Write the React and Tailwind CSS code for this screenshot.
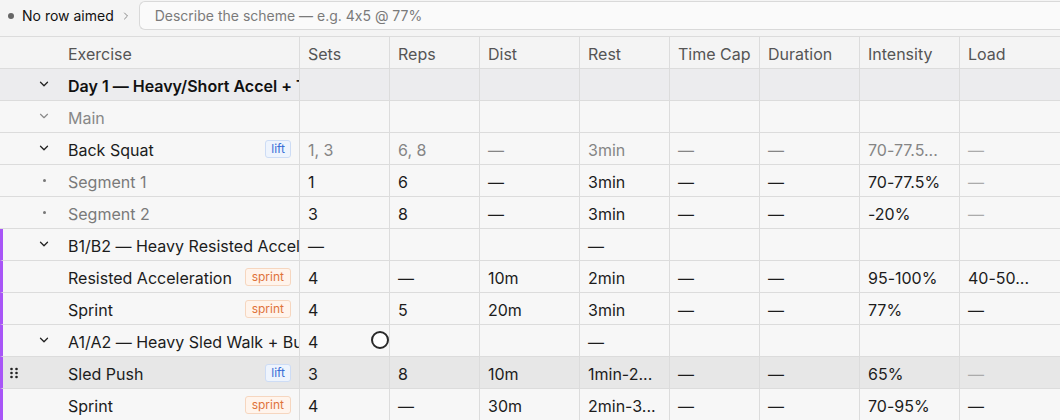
import { ChevronDown, ChevronRight } from 'lucide-react';

const COLS = ['Sets', 'Reps', 'Dist', 'Rest', 'Time Cap', 'Duration', 'Intensity', 'Load'];

// kind: day | block | parent | seg | group | item
const ROWS = [
  { kind: 'day', name: 'Day 1 — Heavy/Short Accel + T', vals: ['', '', '', '', '', '', '', ''] },
  { kind: 'block', name: 'Main', vals: ['', '', '', '', '', '', '', ''] },
  {
    kind: 'parent',
    name: 'Back Squat',
    tag: 'lift',
    vals: ['1, 3', '6, 8', '—', '3min', '—', '—', '70-77.5...', '—'],
    muted: true,
  },
  { kind: 'seg', name: 'Segment 1', vals: ['1', '6', '—', '3min', '—', '—', '70-77.5%', '—'], lightLoad: true },
  { kind: 'seg', name: 'Segment 2', vals: ['3', '8', '—', '3min', '—', '—', '-20%', '—'], lightLoad: true },
  { kind: 'group', name: 'B1/B2 — Heavy Resisted Accel', vals: ['—', '', '', '—', '', '', '', ''], bar: true },
  {
    kind: 'item',
    name: 'Resisted Acceleration',
    tag: 'sprint',
    vals: ['4', '—', '10m', '2min', '—', '—', '95-100%', '40-50...'],
    bar: true,
  },
  { kind: 'item', name: 'Sprint', tag: 'sprint', vals: ['4', '5', '20m', '3min', '—', '—', '77%', '—'], bar: true },
  { kind: 'group', name: 'A1/A2 — Heavy Sled Walk + Bu', vals: ['4', '', '', '—', '', '', '', ''], bar: true },
  {
    kind: 'item',
    name: 'Sled Push',
    tag: 'lift',
    vals: ['3', '8', '10m', '1min-2...', '—', '—', '65%', '—'],
    bar: true,
    hover: true,
    lightLoad: true,
  },
  { kind: 'item', name: 'Sprint', tag: 'sprint', vals: ['4', '—', '30m', '2min-3...', '—', '—', '70-95%', '—'], bar: true },
];

const Tag = ({ type }) =>
  type === 'lift' ? (
    <span className="shrink-0 rounded-[3px] border border-[#cddcf5] bg-[#eef4fd] px-[5px] text-[12px] leading-[16px] text-[#3a6fd6]">
      lift
    </span>
  ) : (
    <span className="shrink-0 rounded-[3px] border border-[#f6d6bf] bg-[#fff4ec] px-[6px] text-[12px] leading-[16px] text-[#e0733a]">
      sprint
    </span>
  );

const ExerciseCell = ({ row }) => {
  const base = `flex h-8 items-center overflow-hidden whitespace-nowrap border-b border-r border-[#dcdcdc] pt-[3px] ${row.tag ? 'pr-2' : ''}`;
  const bar = row.bar ? 'border-l-[3px] border-l-[#a855f7] pl-[1px]' : 'pl-1';
  let icon = <span className="w-[10px]" />;
  if (row.kind === 'day' || row.kind === 'parent' || row.kind === 'group')
    icon = <ChevronDown size={14} strokeWidth={2.2} className="text-[#222]" />;
  if (row.kind === 'block') icon = <ChevronDown size={14} strokeWidth={2} className="text-[#8a8a8a]" />;
  if (row.kind === 'seg') icon = <span className="h-[3px] w-[3px] rounded-full bg-[#777]" />;

  const nameCls =
    row.kind === 'day'
      ? 'font-semibold text-[#111]'
      : row.kind === 'block'
        ? 'text-[13.5px] text-[#888]'
        : row.kind === 'seg'
          ? 'text-[#7a7a7a]'
          : 'text-[#1c1c1c]';

  return (
    <div className={`${base} ${bar}`}>
      <span className="-mt-[3px] flex w-[20px] shrink-0 items-center justify-center">
        {row.hover && (
          <svg width="10" height="14" viewBox="0 0 10 14" fill="#222">
            <circle cx="2.5" cy="3" r="1.3" />
            <circle cx="7.5" cy="3" r="1.3" />
            <circle cx="2.5" cy="7" r="1.3" />
            <circle cx="7.5" cy="7" r="1.3" />
            <circle cx="2.5" cy="11" r="1.3" />
            <circle cx="7.5" cy="11" r="1.3" />
          </svg>
        )}
      </span>
      <span className="-mt-[4px] flex w-[44px] shrink-0 items-center justify-center pr-[4px]">{icon}</span>
      <span className={`text-[16px] ${nameCls}`}>{row.name}</span>
      {row.tag && (
        <span className="-mt-[3px] ml-auto flex">
          <Tag type={row.tag} />
        </span>
      )}
    </div>
  );
};

const Row = ({ row }) => {
  const bg = row.kind === 'day' ? 'bg-[#ececee]' : row.hover ? 'bg-[#e7e7e7]' : 'bg-[#f7f7f7]';
  return (
    <>
      <div className={`${bg} min-w-0`}>
        <ExerciseCell row={row} />
      </div>
      {row.vals.map((v, i) => {
        let color = 'text-[#1c1c1c]';
        if (row.muted) color = 'text-[#858585]';
        if (i === 7 && v === '—' && (row.lightLoad || row.muted)) color = 'text-[#ababab]';
        return (
          <div
            key={i}
            className={`${bg} flex h-8 items-center overflow-hidden whitespace-nowrap border-b border-r border-[#dcdcdc] px-2 pt-[3px] text-[16px] ${color} ${i === 7 ? 'border-r-0' : ''}`}
          >
            {v}
          </div>
        );
      })}
    </>
  );
};

export default function App() {
  return (
    <div className="relative h-[420px] w-[1060px] overflow-hidden bg-[#f7f7f7] font-['Inter',sans-serif] [font-feature-settings:'calt'_0]">
      {/* top bar */}
      <div className="h-[37px] border-b border-[#dcdcdc] bg-[#f4f4f4] pl-[8px] pt-[1px]">
        <div className="flex h-[29px] items-center">
          <span className="h-[6px] w-[6px] rounded-full bg-[#666]" />
          <span className="ml-[8px] text-[14px] text-[#111]">No row aimed</span>
          <ChevronRight size={12} strokeWidth={2} className="ml-[6px] text-[#888]" />
          <div className="ml-[7px] flex h-[29px] flex-1 items-center rounded-l-[6px] border border-r-0 border-[#d9d9d9] bg-[#fafafa] pl-[15px] text-[14px] text-[#7a7a7a]">
            Describe the scheme — e.g. 4x5 @ 77%
          </div>
        </div>
      </div>

      {/* grid */}
      <div className="grid grid-cols-[300px_90px_90px_100px_90px_90px_100px_100px_100px]">
        <div className="flex h-8 items-center border-b border-r border-[#dcdcdc] bg-[#f4f4f4] pl-[68px] pt-[3px] text-[16px] text-[#555]">
          Exercise
        </div>
        {COLS.map((c, i) => (
          <div
            key={c}
            className={`flex h-8 items-center whitespace-nowrap border-b border-r border-[#dcdcdc] bg-[#f4f4f4] px-2 pt-[3px] text-[16px] text-[#555] ${i === 7 ? 'border-r-0' : ''}`}
          >
            {c}
          </div>
        ))}
        {ROWS.map((r, i) => (
          <Row key={i} row={r} />
        ))}
      </div>

      {/* pointer marker */}
      <span className="absolute left-[371px] top-[331px] h-[18px] w-[18px] rounded-full border-2 border-[#2a2a2a] bg-white" />
    </div>
  );
}
